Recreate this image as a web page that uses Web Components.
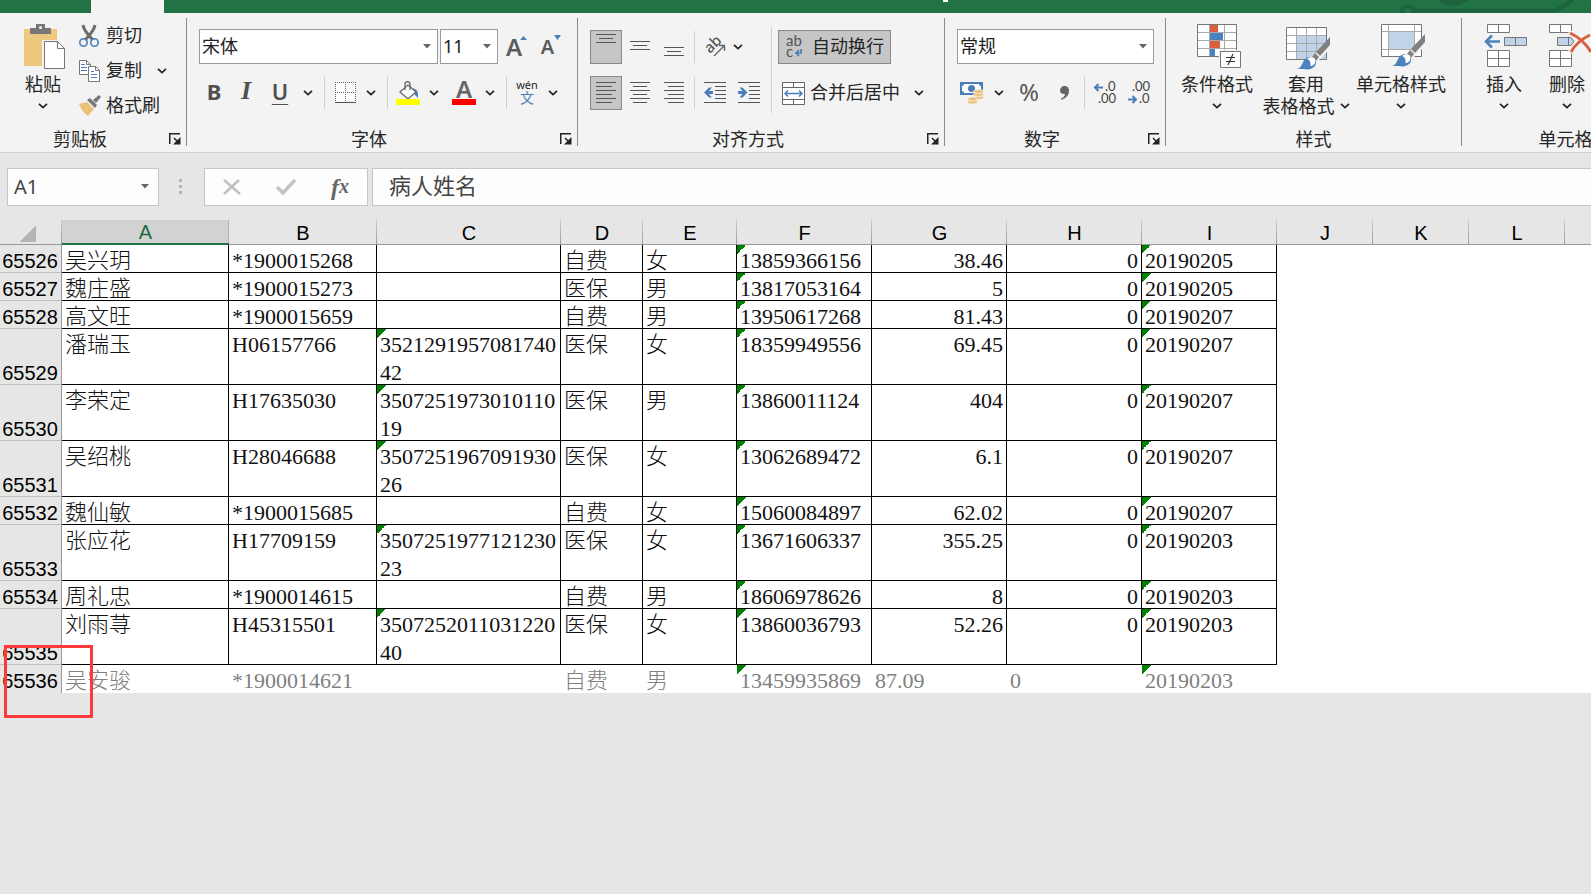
<!DOCTYPE html>
<html lang="zh-CN">
<head>
<meta charset="utf-8">
<title>病人姓名 - Excel</title>
<style>
html,body{height:100%}
body{margin:0;background:#e6e6e6;overflow:hidden;font-family:"Noto Sans","Noto Sans CJK SC",sans-serif;font-size:18px;color:#262626}
</style>
</head>
<body>
<excel-app></excel-app>
<script>
const define = (name, html, setup) => customElements.define(name, class extends HTMLElement {
  constructor() {
    super();
    this.attachShadow({mode: 'open'}).innerHTML = html;
  }
  connectedCallback() { if (setup) setup(this, this.shadowRoot); }
});

/* ---------- icons: [width, height, markup] ---------- */
const line = (rows, x = 0) => rows.map(([a, y, b]) => `<path d="M${a + x} ${y + .5}H${b + x}"/>`).join('');
const brush = (x, y) => `<g transform="translate(${x} ${y})">
  <path d="M32 0 16 16 12 22 20 22 32 10z" fill="#f3f3f3"/>
  <path d="M33 -3 19 12 23 16 33 5z" fill="#808080"/>
  <path d="M18 13 22 17 19 21 15 17z" fill="#808080"/>
  <path d="M0 29C5 28 5 22 8 19A7 7 0 0 1 18 19C22 25 15 31 7 29z" fill="#4a82bd"/>
  <path d="M10 19C13 16 19 17 18.500 21C18.500 24 16 26 13.500 26C14 23 13 20 10 19z" fill="#fff"/></g>`;
const ICONS = {
  paste: [42, 46, `<path d="M0 5H33V42H0z" fill="#edc87e"/><path d="M6 4H12V0H21V4H27V10H6z" fill="#777"/><circle cx="16.500" cy="3.500" r="1.500" fill="#f3f3f3"/><path d="M18 16H36L42 23V46H18z" fill="#f3f3f3"/><path d="M20.500 17.500H33.500L40.500 24.500V44.500H20.500z" fill="#fff" stroke="#777"/><path d="M33.500 17.500V24.500H40.500" fill="none" stroke="#777"/>`],
  cut: [20, 24, `<path d="M4 1Q5 7 14 16M16 1Q15 7 6 16" fill="none" stroke="#6b6b6b" stroke-width="3"/><circle cx="4.500" cy="18.500" r="3.700" fill="none" stroke="#4a7ebb" stroke-width="1.600"/><circle cx="15.500" cy="18.500" r="3.700" fill="none" stroke="#4a7ebb" stroke-width="1.600"/>`],
  copy: [21, 22, `<g fill="#fff" stroke="#777"><path d="M.5.5H7.500L11.500 4.500V14.500H.5z"/><path d="M7.500.5V4.500H11.500" fill="none"/><path d="M9.500 6.500H16.500L20.500 10.500V21.500H9.500z"/><path d="M16.500 6.500V10.500H20.500" fill="none"/></g><g stroke="#4a7ebb">${line([[2, 4, 6], [2, 7, 8], [2, 10, 8], [12, 11, 15], [12, 14, 18], [12, 17, 18]])}</g>`],
  painter: [24, 21, `<path d="M0 9 8 7 15 14 9 21Q3 17 0 9z" fill="#edc07a"/><path d="M8 5 11 3 18 10 16 13z" fill="#777"/><path d="M14 5 20 0 22 2 17 8z" fill="#777"/>`],
  launcher: [12, 12, `<path d="M.75 11V.75H11M5 5 9 9" fill="none" stroke="#222" stroke-width="1.500"/><path d="M11.500 4V11.500H4z" fill="#222"/>`],
  chev: [10, 6, `<path d="M1 .8 5 4.600 9 .8" fill="none" stroke="#222" stroke-width="1.700"/>`],
  arrow: [8, 5, `<path d="M0 0H8L4 4.500z" fill="#666"/>`],
  grow: [20, 22, `<text x="-1" y="20" font-size="24" font-weight="600" fill="#5c5c5c">A</text><path d="M13 4 16.500 0 20 4z" fill="#4a7ebb"/>`],
  borders: [21, 22, `<path d="M1 1H20V19H1z" fill="#fff"/><path d="M0 .5H21M0 10.500H21M.5 0V20M10.500 0V20M20.500 0V20" stroke="#666" stroke-dasharray="1 1"/><path d="M0 20.500H21" stroke="#555"/>`],
  fill: [24, 24, `<path d="M17 7Q22 9 22 13V17L19 14z" fill="#4a7ebb"/><path d="M4 11 12 4 20 11 12 18z" fill="#fff" stroke="#666" stroke-width="1.300"/><path d="M9 9V3Q9 .7 11.500.7T14 3V9" fill="none" stroke="#666" stroke-width="1.300"/><path d="M0 18H24V24H0z" fill="#ff0"/>`],
  top: [20, 34, `<g stroke="#555">${line([[0, 4, 20], [3, 8, 17], [0, 12, 20]])}</g>`],
  middle: [20, 34, `<g stroke="#555">${line([[0, 11, 20], [3, 15, 17], [0, 19, 20]])}</g>`],
  bottom: [20, 34, `<g stroke="#555">${line([[0, 17, 20], [3, 21, 17], [0, 25, 20]])}</g>`],
  left: [20, 22, `<g stroke="#555">${line([[0, 0, 20], [0, 4, 16], [0, 8, 20], [0, 12, 16], [0, 16, 20], [0, 20, 16]])}</g>`],
  center: [20, 22, `<g stroke="#555">${line([[0, 0, 20], [3, 4, 17], [0, 8, 20], [3, 12, 17], [0, 16, 20], [3, 20, 17]])}</g>`],
  right: [20, 22, `<g stroke="#555">${line([[0, 0, 20], [4, 4, 20], [0, 8, 20], [4, 12, 20], [0, 16, 20], [4, 20, 20]])}</g>`],
  outdent: [22, 22, `<g stroke="#555">${line([[0, 0, 22], [11, 4, 22], [11, 8, 22], [11, 12, 22], [11, 16, 22], [0, 20, 22]])}</g><path d="M0 10.500 5 5.500H8L5 9H9V12H5L8 15.500H5z" fill="#4a7ebb"/>`],
  indent: [22, 22, `<g stroke="#555">${line([[0, 0, 22], [11, 4, 22], [11, 8, 22], [11, 12, 22], [11, 16, 22], [0, 20, 22]])}</g><path d="M9.500 10.500 4.500 5.500H1.500L4.500 9H0V12H4.500L1.500 15.500H4.500z" fill="#4a7ebb"/>`],
  orient: [20, 22, `<text transform="translate(5 18) rotate(-45)" font-size="15" font-weight="500" fill="#555">ab</text><path d="M9 20 19 10M14 9.500H19.500V15" fill="none" stroke="#666" stroke-width="1.400"/>`],
  wrap: [20, 24, `<g font-family="Lato, sans-serif" font-size="15" fill="#555"><text x="1" y="11">ab</text><text x="1" y="22">c</text></g><path d="M16 14V18H11.500M14 15 11 18 14 21" fill="none" stroke="#4a7ebb" stroke-width="1.700"/>`],
  merge: [23, 23, `<path d="M.5.5H22.500V22.500H.5zM.5 5.500H22.500M.5 17.500H22.500M11.500.5V5.500M11.500 17.500V22.500" fill="#fff" stroke="#666"/><path d="M3 11.500H20M6 8.500 3 11.500 6 14.500M17 8.500 20 11.500 17 14.500" fill="none" stroke="#4a7ebb" stroke-width="1.500"/>`],
  money: [24, 22, `<path d="M0 0H23V13H0z" fill="#4a7ebb"/><path d="M4 2H19Q19 4 21 4V9Q19 9 19 11H4Q4 9 2 9V4Q4 4 4 2z" fill="#fff"/><circle cx="11.500" cy="6.500" r="3.500" fill="#4a7ebb"/><g fill="#edc07a" stroke="#f3f3f3" stroke-width=".8"><ellipse cx="18.500" cy="15.500" rx="5" ry="2"/><ellipse cx="18.500" cy="12.500" rx="5" ry="2"/><ellipse cx="18.500" cy="9.500" rx="5" ry="2"/><ellipse cx="12.500" cy="20" rx="5" ry="2"/><ellipse cx="12.500" cy="17" rx="5" ry="2"/></g>`],
  comma: [9, 14, `<path d="M4.500 0A4.300 4.300 0 0 1 9 5Q9 11 1.500 14L1 12.500Q4.500 11 5 8Q0 8.500 0 4.300A4.300 4.300 0 0 1 4.500 0z" fill="#666"/>`],
  incdec: [22, 22, `<g font-family="Lato, sans-serif" font-size="13" fill="#444"><text x="11" y="9">.0</text><text x="4" y="21">.00</text></g><path d="M9 5.500H1M4.500 2 1 5.500 4.500 9" fill="none" stroke="#4a7ebb" stroke-width="2"/>`],
  decdec: [22, 22, `<g font-family="Lato, sans-serif" font-size="13" fill="#444"><text x="4" y="9">.00</text><text x="11" y="21">.0</text></g><path d="M0 17.500H8M4.500 14 8 17.500 4.500 21" fill="none" stroke="#4a7ebb" stroke-width="2"/>`],
  cond: [44, 45, `<path d="M.5.5H39.500V32.500H.5z" fill="#fff"/><path d="M.5 8.500H39.500M.5 16.500H39.500M.5 24.500H39.500M12.500.5V32M27.500.5V32" stroke="#aaa"/><path d="M.5.5H39.500V32.500H.5z" fill="none" stroke="#777"/><path d="M13 1H21V8H13zM13 17H23V24H13z" fill="#d9603f"/><path d="M13 9H26V16H13zM13 25H18V32H13z" fill="#4a82bd"/><path d="M22 26H44V45H22z" fill="#f3f3f3"/><path d="M23.500 27.500H43.500V43.500H23.500z" fill="#fff" stroke="#777"/><path d="M29 33.500H38M29 37.500H38M36 30 31 41" stroke="#333" stroke-width="1.200"/>`],
  table: [44, 45, `<path d="M.5 3.500H40.500V35.500H.5z" fill="#fff"/><path d="M10 12H40V35H10z" fill="#c0d3e8"/><path d="M.5 11.500H40M.5 19.500H40M.5 27.500H40M10.500 4V35M20.500 4V35M30.500 4V35" stroke="#aaa"/><path d="M.5 3.500H40.500V35.500H.5z" fill="none" stroke="#777"/>${brush(11, 16)}`],
  cells: [44, 45, `<path d="M.5.5H40.500V32.500H.5z" fill="#fff"/><path d="M7 7H34V25H7z" fill="#c0d3e8"/><path d="M.5 7.500H40M.5 25.500H40M7.500.5V32M33.500.5V32" stroke="#aaa"/><path d="M.5.5H40.500V32.500H.5z" fill="none" stroke="#777"/>${brush(11, 13)}`],
  insert: [44, 45, `<g fill="#fff" stroke="#777"><path d="M3.500.5H25.500V8.500H3.500zM14.500.5V8.500M3.500 26.500H25.500V42.500H3.500zM3.500 34.500H25.500M14.500 26.500V42.500"/><path d="M20.500 13.500H42.500V21.500H20.500zM31.500 13.500V21.500" fill="#c0d3e8"/></g><path d="M16 17.500H2M8 11.500 2 17.500 8 23.500" fill="none" stroke="#4a82bd" stroke-width="2.600"/>`],
  remove: [40, 45, `<g fill="#fff" stroke="#777"><path d="M.5.5H22.500V8.500H.5zM11.500.5V8.500M.5 26.500H22.500V42.500H.5zM.5 34.500H22.500M11.500 26.500V42.500"/><path d="M8.500 13.500H22L25 17.500 22 21.500H8.500zM19.500 13.500V21.500" fill="#c0d3e8"/></g><path d="M20 8 32 17 43 28M42 10 30 18 21 28" fill="none" stroke="#f3f3f3" stroke-width="5"/><path d="M21 9 Q34 15 42 28M41 11Q28 17 22 28" fill="none" stroke="#d9603f" stroke-width="3"/>`],
  cancel: [18, 16, `<path d="M1 1 17 15M16 1 1 15" stroke="#c0c0c0" stroke-width="2.600"/>`],
  enter: [20, 16, `<path d="M1 8 7 14 19 1" fill="none" stroke="#c4c4c4" stroke-width="3.600"/>`],
  grip: [4, 16, `<path d="M0 0H3V3H0zM0 6H3V9H0zM0 12H3V15H0z" fill="#b4b4b4"/>`],
  circuit: [190, 13, `<g fill="none" stroke="#1e6340" stroke-width="4"><path d="M10 10.500H155L172 0"/><circle cx="7" cy="12" r="6"/></g><circle cx="52" cy="-16" r="22" fill="#1e6340"/>`]
};

define('x-icon', `<style>:host{display:inline-flex;flex:none}svg{display:block;overflow:visible;font-family:"Noto Sans",sans-serif}</style><span></span>`, (el, root) => {
  const [w, h, m] = ICONS[el.getAttribute('name')];
  root.querySelector('span').innerHTML = `<svg width="${w}" height="${h}" viewBox="0 0 ${w} ${h}" aria-hidden="true">${m}</svg>`;
});

define('drop-list', `<style>
:host{display:block;position:relative;height:35px;flex:none}
select{appearance:none;box-sizing:border-box;width:100%;height:100%;margin:0;padding:0 20px 1px 2px;border:1px solid #999;border-radius:0;background:#fff;font:inherit;color:#222}
x-icon{position:absolute;right:7px;top:15px;pointer-events:none}
</style><select></select><x-icon name="arrow"></x-icon>`, (el, root) => {
  const s = root.querySelector('select');
  s.setAttribute('aria-label', el.getAttribute('label'));
  s.innerHTML = `<option>${el.getAttribute('value')}</option>`;
});

define('ribbon-group', `<style>
:host{display:flex;flex-direction:column;flex:none;box-sizing:border-box;height:128px;border-right:1px solid #8a8a8a}
.content{height:111px;display:flex;flex:none}
footer{display:flex;align-items:center;flex:none;height:20px;line-height:20px}
.label{flex:1;text-align:center}
button{width:26px;height:20px;padding:0 5px 0 0;border:0;background:none;display:flex;justify-content:flex-end;align-items:center}
</style><div class="content"><slot></slot></div><footer><span class="label"></span></footer>`, (el, root) => {
  root.querySelector('.label').textContent = el.getAttribute('label');
  if (!el.hasAttribute('plain')) root.querySelector('footer').insertAdjacentHTML('beforeend', '<button aria-label="更多选项"><x-icon name="launcher"></x-icon></button>');
});

define('big-button', `<style>
:host{display:block;flex:none}
button{width:100%;padding:6px 0 0;border:0;background:none;font:inherit;color:inherit;display:flex;flex-direction:column;align-items:center;line-height:22px;white-space:nowrap}
.pic{height:49px;padding-left:4px}
.more{height:22px;display:flex;align-items:center;gap:5px}
</style><button><span class="pic"><slot name="icon"></slot></span><span><slot></slot></span><span class="more"><slot name="more"></slot><x-icon name="chev"></x-icon></span></button>`);

define('title-bar', `<style>
:host{display:flex;height:13px;background:#217346;overflow:hidden}
.tab{width:73px;margin-left:91px;background:#f3f3f3}
.mark{width:5px;height:2px;margin-left:779px;background:#fff}
x-icon{margin-left:auto}
</style><span class="tab"></span><span class="mark"></span><x-icon name="circuit"></x-icon>`);

define('excel-ribbon', `<style>
:host{display:flex;box-sizing:border-box;height:140px;padding:5px 0 6px;background:#f3f3f3;border-bottom:1px solid #d0d0d0;overflow:hidden}
button{padding:0;border:0;background:none;font:inherit;color:inherit;display:flex;align-items:center;justify-content:center;height:34px;flex:none}
.rows{display:flex;flex-direction:column;gap:12px;padding-top:11px}
.row{display:flex;align-items:center;height:35px}
.row + .row{height:34px}
.i{width:30px}.c{width:22px}.s{width:34px}
.sep{width:1px;height:32px;background:#d0d0d0;margin:0 5px;flex:none}
.on{box-sizing:border-box;background:#c6c6c6;border:1px solid #888}
.al{width:32px;margin-right:2px}
.clip{display:flex;flex-direction:column}
.clip button{height:35px;justify-content:flex-start}
.clip .ic{width:27px;display:flex}
.txt{display:block;padding-bottom:4px}
.glyph{font-weight:700;font-size:22px;color:#505050;padding-bottom:4px}
.it{font-family:"Liberation Serif",serif;font-style:italic;font-size:26px}
.u{text-decoration:underline;text-decoration-thickness:1px;text-underline-offset:4px;font-weight:600}
.small{font-size:20px;line-height:24px;font-weight:600;color:#5c5c5c;display:flex}
.fc{display:flex;flex-direction:column;align-items:center;width:24px;height:24px;line-height:16px;font-size:24px;font-weight:600;color:#666;border-bottom:6px solid #f00;box-sizing:border-box}
.wen{flex-direction:column;font-size:11px;line-height:11px}
.wen span{padding-bottom:1px}
.wen b{font-size:14px;line-height:14px;font-weight:400;color:#4a7ebb;padding-bottom:3px}
</style>
<ribbon-group label="剪贴板" style="width:187px">
  <big-button style="width:48px;margin-left:19px"><x-icon slot="icon" name="paste"></x-icon>粘贴</big-button>
  <div class="clip" style="margin-left:12px">
    <button><span class="ic"><x-icon name="cut"></x-icon></span><span class="txt">剪切</span></button>
    <div style="display:flex"><button><span class="ic"><x-icon name="copy"></x-icon></span><span class="txt">复制</span></button><button aria-label="复制选项" style="width:40px;justify-content:center"><x-icon name="chev"></x-icon></button></div>
    <button><span class="ic"><x-icon name="painter"></x-icon></span><span class="txt">格式刷</span></button>
  </div>
</ribbon-group>
<ribbon-group label="字体" style="width:391px">
  <div class="rows" style="padding-left:12px">
    <div class="row"><drop-list label="字体" value="宋体" style="width:239px;margin-right:2px"></drop-list><drop-list label="字号" value="11" style="width:58px"></drop-list><button aria-label="增大字号" class="s" style="margin-left:2px"><x-icon name="grow"></x-icon></button><button aria-label="减小字号" class="s"><span class="small">A<svg width="7" height="5" viewBox="0 0 7 5"><path d="M0 0H7L3.500 5z" fill="#4a7ebb"/></svg></span></button></div>
    <div class="row"><button class="i glyph">B</button><button class="s glyph it">I</button><button class="s glyph u">U</button><button class="c" aria-label="下划线选项"><x-icon name="chev"></x-icon></button><i class="sep"></i>
      <button class="i" aria-label="边框"><x-icon name="borders"></x-icon></button><button class="c" aria-label="边框选项"><x-icon name="chev"></x-icon></button><i class="sep"></i>
      <button class="i" aria-label="填充颜色"><x-icon name="fill"></x-icon></button><button class="c" aria-label="填充选项" style="margin-right:4px"><x-icon name="chev"></x-icon></button>
      <button class="i" aria-label="字体颜色"><span class="fc">A</span></button><button class="c" aria-label="颜色选项"><x-icon name="chev"></x-icon></button><i class="sep"></i>
      <button class="i wen"><span>wén</span><b>文</b></button><button class="c" aria-label="拼音选项"><x-icon name="chev"></x-icon></button></div>
  </div>
</ribbon-group>
<ribbon-group label="对齐方式" style="width:367px">
  <div class="rows" style="padding-left:12px">
    <div class="row"><button class="al on" aria-label="顶端对齐"><x-icon name="top"></x-icon></button><button class="al" aria-label="垂直居中"><x-icon name="middle"></x-icon></button><button class="al" aria-label="底端对齐"><x-icon name="bottom"></x-icon></button><i class="sep" style="margin:0 5px 0 2px"></i>
      <button class="i" aria-label="方向"><x-icon name="orient"></x-icon></button><button class="c" aria-label="方向选项" style="width:16px"><x-icon name="chev"></x-icon></button></div>
    <div class="row"><button class="al on" aria-label="左对齐"><x-icon name="left"></x-icon></button><button class="al" aria-label="居中"><x-icon name="center"></x-icon></button><button class="al" aria-label="右对齐"><x-icon name="right"></x-icon></button><i class="sep" style="margin:0 4px 0 2px"></i>
      <button class="al" aria-label="减少缩进"><x-icon name="outdent"></x-icon></button><button class="al" aria-label="增加缩进"><x-icon name="indent"></x-icon></button></div>
  </div>
  <i class="sep" style="height:86px;margin:9px 6px 0 4px"></i>
  <div class="rows">
    <div class="row"><button class="on" style="width:113px;gap:7px"><x-icon name="wrap"></x-icon><span class="txt">自动换行</span></button></div>
    <div class="row"><button style="padding-left:4px;gap:5px"><x-icon name="merge"></x-icon><span class="txt">合并后居中</span></button><button class="c" aria-label="合并选项" style="margin-left:8px"><x-icon name="chev"></x-icon></button></div>
  </div>
</ribbon-group>
<ribbon-group label="数字" style="width:221px">
  <div class="rows" style="padding-left:12px">
    <div class="row"><drop-list label="数字格式" value="常规" style="width:197px"></drop-list></div>
    <div class="row"><button class="i" aria-label="会计数字格式"><x-icon name="money"></x-icon></button><button class="c" aria-label="会计选项" style="width:24px"><x-icon name="chev"></x-icon></button><button class="s" style="font-size:24px;color:#555;width:36px;padding-bottom:4px">%</button><button class="s" aria-label="千位分隔"><x-icon name="comma"></x-icon></button><i class="sep" style="margin:0 3px"></i><button class="s" aria-label="增加小数位数"><x-icon name="incdec"></x-icon></button><button class="s" aria-label="减少小数位数"><x-icon name="decdec"></x-icon></button></div>
  </div>
</ribbon-group>
<ribbon-group label="样式" plain style="width:296px">
  <div style="display:flex;gap:4px;padding-left:10px">
    <big-button style="width:82px"><x-icon slot="icon" name="cond"></x-icon>条件格式</big-button>
    <big-button style="width:88px"><x-icon slot="icon" name="table"></x-icon>套用<span slot="more">表格格式</span></big-button>
    <big-button style="width:94px"><x-icon slot="icon" name="cells"></x-icon>单元格样式</big-button>
  </div>
</ribbon-group>
<ribbon-group label="单元格" plain style="width:208px">
  <div style="display:flex;gap:4px;padding-left:13px">
    <big-button style="width:58px"><x-icon slot="icon" name="insert"></x-icon>插入</big-button>
    <big-button style="width:60px"><x-icon slot="icon" name="remove"></x-icon>删除</big-button>
  </div>
</ribbon-group>`);

define('formula-bar', `<style>
:host{display:flex;height:38px;padding:15px 0 14px 7px;background:#e6e6e6;color:#444}
.name,.tools{box-sizing:border-box;border:1px solid #c6c6c6;background:#fdfdfd;display:flex;align-items:center;flex:none}
.name{position:relative;width:152px}
input{box-sizing:border-box;min-width:0;width:100%;height:100%;margin:0;border:0;padding:0 0 2px;background:none;font:inherit;color:inherit}
.name input{font-size:20px;padding-left:6px}
.name x-icon{position:absolute;right:9px;top:15px}
.grip{width:44px;margin-right:1px;display:flex;align-items:center;justify-content:center;flex:none}
.tools{width:164px;padding:0;margin-right:4px}
button{flex:1;padding:0;border:0;background:none;display:flex;justify-content:center;color:#666;font:italic 700 24px "Liberation Serif",serif}
.tools sub{font-size:20px;line-height:24px;vertical-align:baseline}
.value{flex:1;border:1px solid #c6c6c6;border-right:0;background:#fdfdfd}
.value input{font-size:22px;padding:0 0 6px 16px}
</style>
<div class="name"><input aria-label="名称框" value="A1"><x-icon name="arrow"></x-icon></div>
<div class="grip"><x-icon name="grip"></x-icon></div>
<div class="tools"><button aria-label="取消"><x-icon name="cancel"></x-icon></button><button aria-label="输入"><x-icon name="enter"></x-icon></button><button aria-label="插入函数">f<sub>x</sub></button></div>
<div class="value"><input aria-label="编辑栏" value="病人姓名"></div>`);

const ROWS = [
  [65526, '吴兴玥', '*1900015268', '', '自费', '女', '13859366156', '38.46', '0', '20190205'],
  [65527, '魏庄盛', '*1900015273', '', '医保', '男', '13817053164', '5', '0', '20190205'],
  [65528, '高文旺', '*1900015659', '', '自费', '男', '13950617268', '81.43', '0', '20190207'],
  [65529, '潘瑞玉', 'H06157766', '352129195708174042', '医保', '女', '18359949556', '69.45', '0', '20190207'],
  [65530, '李荣定', 'H17635030', '350725197301011019', '医保', '男', '13860011124', '404', '0', '20190207'],
  [65531, '吴绍桃', 'H28046688', '350725196709193026', '医保', '女', '13062689472', '6.1', '0', '20190207'],
  [65532, '魏仙敏', '*1900015685', '', '自费', '女', '15060084897', '62.02', '0', '20190207'],
  [65533, '张应花', 'H17709159', '350725197712123023', '医保', '女', '13671606337', '355.25', '0', '20190203'],
  [65534, '周礼忠', '*1900014615', '', '自费', '男', '18606978626', '8', '0', '20190203'],
  [65535, '刘雨荨', 'H45315501', '350725201103122040', '医保', '女', '13860036793', '52.26', '0', '20190203'],
  [65536, '吴安骏', '*1900014621', '', '自费', '男', '13459935869', '87.09', '0', '20190203']
];
define('sheet-grid', `<style>
:host{display:block;position:relative}
table{table-layout:fixed;width:100%;border-collapse:separate;border-spacing:0;background:#fff}
th{padding:0;font:20px "Liberation Sans",sans-serif;color:#000;background:#e6e6e6}
thead th{box-sizing:border-box;height:25px;padding-top:2px;line-height:22px;border-bottom:1px solid #999;background:linear-gradient(#d0d0d0,#999) right/1px 100% no-repeat #e6e6e6}
thead th:last-child{background:#e6e6e6}
thead th.sel{color:#1d6a40;background:linear-gradient(#b0b0b0,#b0b0b0) right/1px 100% no-repeat #d2d2d2;line-height:21px;border-bottom:2px solid #217346}
tbody th{vertical-align:bottom;line-height:28px;padding-right:2px;box-shadow:inset -1px 0 #999,inset 0 -1px #c0c0c0}
tbody tr:last-child th{box-shadow:inset -1px 0 #999}
td{padding:0 4px 0 3px;height:28px;line-height:28px;vertical-align:top;font-family:"Liberation Serif","Noto Sans CJK SC",serif;font-size:22px;font-weight:300;color:#111;word-break:break-all;box-shadow:inset -1px -1px #000}
/* text sits slightly below the middle of its 28px line without growing the row */
td div,tbody th div{padding-top:2px;margin-bottom:-2px}
td.num{text-align:right}
td.flag{background:linear-gradient(135deg,#008000 50%,transparent 50%) 0 0/9px 9px no-repeat}
td.blank,tr.last td{box-shadow:none}
tr.last td{color:#808080;text-align:left}
.all{display:block;width:17px;height:17px;margin-left:19px;background:linear-gradient(135deg,transparent 50%,#b4b4b4 50%)}
.mark{position:absolute;left:4px;bottom:-25px;width:83px;height:67px;border:3px solid #fb3b3b}
</style>
<table><colgroup></colgroup><thead><tr></tr></thead><tbody></tbody></table><div class="mark"></div>`, (el, root) => {
  const widths = [62, 167, 148, 184, 82, 94, 135, 135, 135, 135, 96, 96, 96];
  root.querySelector('colgroup').innerHTML = widths.map(w => `<col style="width:${w}px">`).join('') + '<col>';
  root.querySelector('thead tr').innerHTML = '<th><span class="all"></span></th>' + [...'ABCDEFGHIJKL'].map(c => `<th scope="col"${c === 'A' ? ' class="sel"' : ''}>${c}</th>`).join('') + '<th></th>';
  root.querySelector('tbody').innerHTML = ROWS.map(([n, ...cells], r) =>
    `<tr${r === ROWS.length - 1 ? ' class="last"' : ''}><th scope="row"><div>${n}</div></th>` + cells.map((v, i) => {
      const cls = (i === 6 || i === 7) ? 'num' : (v && (i === 2 || i === 5 || i === 8)) ? 'flag' : '';
      return `<td class="${cls}"><div>${v}</div></td>`;
    }).join('') + '<td class="blank" colspan="4"></td></tr>').join('');
});

define('excel-app', `<style>:host{display:block}</style><title-bar></title-bar><excel-ribbon></excel-ribbon><formula-bar></formula-bar><sheet-grid></sheet-grid>`);
</script>
</body>
</html>
